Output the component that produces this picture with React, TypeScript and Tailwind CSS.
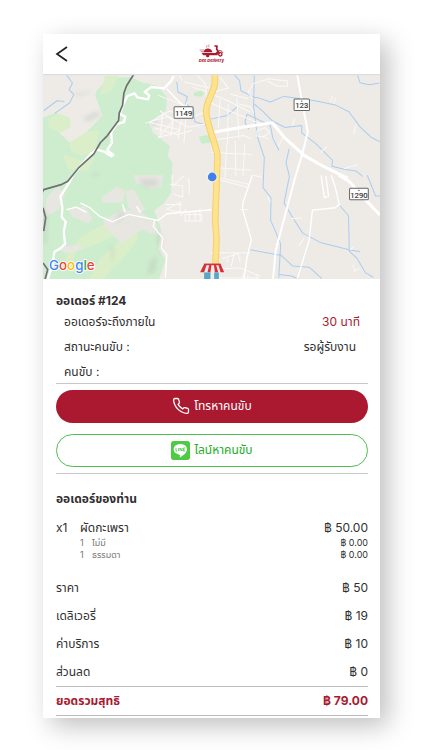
import type { ReactNode } from "react";
import clsx from "clsx";

const FONT = "font-[Inter,'Noto_Sans_Thai','Noto_Sans','DejaVu_Sans',sans-serif]";

const summary = [
  { label: "ราคา", value: "50" },
  { label: "เดลิเวอรี่", value: "19" },
  { label: "ค่าบริการ", value: "10" },
  { label: "ส่วนลด", value: "0" },
];

const options = [
  { qty: 1, name: "ไม่มี", price: "0.00" },
  { qty: 1, name: "ธรรมดา", price: "0.00" },
];

function DeliveryLogo() {
  return (
    <svg viewBox="0 0 84 60" className="h-5 w-7" role="img" aria-label="Dee Delivery">
      <g fill="none" stroke="#a81a30" strokeLinecap="round" strokeLinejoin="round">
        <path d="M9 18h11M12 23h8M15 28h5" strokeWidth="1.5" />
        <path d="M30 4c-4 3 2 4-1 6M36 2c-4 3 2 4-1 7" strokeWidth="1.5" />
        <path d="M54 6h6l-1 9 7 12" strokeWidth="5" />
        <circle cx="70" cy="31" r="5" strokeWidth="4" />
        <path d="M60 26c4-8 14-8 17-1" strokeWidth="3" />
      </g>
      <g fill="#a81a30">
        <path d="M20 25c1-15 24-15 26 0z" />
        <path d="M15 27h37c4 0 7-1 8-6l5 5-4 8H23c-5 0-7-2-8-7z" />
        <circle cx="32" cy="35" r="5" />
      </g>
      <text x="43" y="54" textAnchor="middle" fontSize="12" fontWeight="800" fontStyle="italic" fill="#a81a30" fontFamily="Inter, sans-serif">
        Dee Delivery
      </text>
    </svg>
  );
}

function LineIcon() {
  return (
    <svg viewBox="0 0 57 57" className="size-[19px]" aria-hidden="true">
      <rect width="57" height="57" rx="8" fill="#4ccb43" />
      <path d="M28 9C16 9 8 16 8 25c0 8 7 14 17 16 3 1 2 3 1 7 0 2 2 1 3 0 8-5 19-13 19-23C48 16 40 9 28 9z" fill="#fff" />
      <path d="M15 21v9h4M23 21v9M27 30v-9l6 9v-9M42 21h-5v9h5M37 25h4" fill="none" stroke="#4ccb43" strokeWidth="2.5" />
    </svg>
  );
}

function RoadSign({ x, y, width, label }: { x: number; y: number; width: number; label: string }) {
  return (
    <g>
      <rect x={x} y={y} width={width} height="34" rx="3" fill="#fff" stroke="#666" strokeWidth="3" />
      <circle cx={x + width / 2} cy={y + 6} r="2" fill="#333" />
      <text x={x + width / 2} y={y + 28} textAnchor="middle" fontSize="23" fill="#333" stroke="#333" strokeWidth="0.5" fontFamily="Roboto, sans-serif">
        {label}
      </text>
    </g>
  );
}

function DeliveryMap() {
  return (
    <svg viewBox="0 0 1008 612" className="block w-full" role="img" aria-label="Map">
      <defs>
        <filter id="soft"><feGaussianBlur stdDeviation="7" /></filter>
        <filter id="edge"><feGaussianBlur stdDeviation="2" /></filter>
      </defs>
      <rect width="1008" height="615" fill="#eeebe7" />

      {/* Hills and forest */}
      <g filter="url(#edge)">
        <path d="M0 130l40-14 20 10-30 20 14 25 36 34 48-30 30-30 20-20-22-60 4-15 35-35 40-5 30 0 30 15 48 10 28 35-4 40-52 35 14 30 50 40-6 30 14 20-4 90-20 30-30 24 20 55-8 60 22 30-20 60-20 30-20 30-30 40-100 4-40 50H0z" fill="#ceedcf" />
        <g fill="#daefc9">
          <path d="M15 135l30-17 35 12 3 30-30 16-35-16z" />
          <path d="M80 205l48-30 40-10-10 60-40 20-35-15z" />
          <path d="M60 240l58 20 36-10-20 40-60-5z" />
          <path d="M185 5l42 0-25 45-30 12z" />
          <path d="M110 490l75-42 50 26-80 36-55 20-20 50-30 10 30-60z" />
          <path d="M240 490l40-30 4 35-40 50-65 68h-40l30-60z" />
        </g>
        <g fill="#e8e6e1">
          <path d="M10 370l35-34 20 24-18 45-40 23z" />
          <path d="M75 405l50-10 22 36-10 16-50-20z" />
          <path d="M175 370l48-34 22 14-6 34-60 2z" />
          <path d="M180 440l60-38 60 16 38 28 10 40-52-20-60 40-48-44z" />
          <path d="M45 518l65-8 8 14-50 12z" />
          <path d="M270 303h90l-6 34-35 8-40-20z" />
          <path d="M246 350l25-5 34 60-20 14-30-20z" />
        </g>
      </g>
      <g fill="#b8c4b7" opacity="0.4" filter="url(#soft)">
        <path d="M120 130l45-20 6 14-40 20zM80 60l80-10-50 14zM285 315h55l6 18-40 7z" />
        <path d="M340 460l16 30-2 50-14-40zM225 410l25 8-32 30zM200 510l14 10-4 60zM320 560l22-20-6 50-26 12z" />
        <path d="M140 300l30-8-8 16zM330 130l18 20-25 10zM0 400l15 20-3 80-12 20z" />
      </g>
      <g fill="#cbeccb">
        <path d="M450 56l24-7 9 10-10 9-22-2zM466 187l40-7v25l-32 4z" />
      </g>

      {/* Waterways */}
      <g fill="none" stroke="#a9cdf0" strokeWidth="3" strokeLinejoin="round">
        <path d="M70 2l18 25-10 20 14 14-12 25-45 32M2 110l40-30 22 2" />
        <path d="M400 24l4 30 28 14-6 20 24 20 4 35 28 8 20 10" />
        <path d="M570 0l18 20 4 30 40 20 10 0M632 90l24 20 30 30 38 20 50-6 0 22 42 32 50 50-2 18 40 10 32 4 20 16" />
        <path d="M501 135l50-11 30-26M610 120l-6 25 12 20M610 120l70 34 8 40 18 35" />
        <path d="M640 70l40 14 40-17 60 8 30 4 65 14 40 20 34 46 32 30 27 14M940 0l8 26 28 6 30-5" />
        <path d="M632 0l-2 100 12 90 20 60-4 90 24 30-1 68 30 70-6 102M736 224l-9 42 10 40-16 80 30 50 26 40 55 29 90 22 26 4" />
        <path d="M710 540l36 34 50 4 38 34M620 526l90 16M888 394l26 30 2 106 24 22 24 42 24 14" />
        <path d="M706 600l38 4 24 11M970 303l25 62h13" />
      </g>

      {/* Small local streets */}
      <g fill="none" stroke="#faf9f7" strokeWidth="3">
        <path d="M345 64l90 35M384 8l24-6 8 18M424 24l75 18M448 40l42 12M462 3l24 28 6 80-54 20-60-20-60 34M350 110l40 30-44 50 60-18 14-56M320 145l90 22M305 147l70-20 60 32 56-10M358 120l-8 60M394 104l-12 84M410 155l-6 40M430 85l-8 120M330 160l70 22 46-14" />
        <path d="M380 330l40 5M385 303l4 32 32-30M365 390l50 0M370 405l40-22v30zM425 420h50v20h-50zM438 410v30M455 410v30M470 403v38M410 425l20-20M390 360l28 8v-30M436 310l2 50" />
        <path d="M504 60l50 20 65 34M500 86l55 24 100 40M530 75l-6 85M554 90l-2 120M580 72l6 120M500 200l100-16 24 10M504 235l120 6M510 280l112 8M520 210v100M550 210l-6 100M575 200l2 105M604 210l-6 95M628 74l-14-20 16-26 45-14 56 7v16h-30l-30-16" />
        <path d="M640 170l24-10 14 14-20 15-18-4zM655 185l20 10M585 90l35 8 10 18M530 10l24 32-40 12M560 60l52 14M860 83l6-17M870 88l6-16M930 180l5-26M745 155l8-22M704 216l13-26M830 235l19-18M900 283l42-12" />
        <path d="M525 310l90 20M530 318l80 20M630 303l24 6M672 368l8 15M742 433l32-2M590 405h24M928 570l4 20 14-10M918 526l10-8M780 492l-14 22M500 535h120M536 552l48-14 6 26M552 550v12M570 544v10M573 532l-10 44M500 583l90-3 60 25M600 594l-3 20M613 600v15M640 600v15M525 586v20M506 610h140" />
      </g>

      {/* Main roads */}
      <g fill="none" stroke="#fff" strokeLinejoin="round">
        <path d="M390 8l-8 15-20 20-38-4-20 15 14 10-4 12-32-6-8-12-22 8-14 30-8 24 16 8-4 16-22 6-16 26 2 30-14 22 18 14-6 4-22-14-20-6-18 12-54 64-12 24-26 40 6 34-2 28 12 14-6 30 4 36-14 14-18 10-6 40-20 60" strokeWidth="7" />
        <path d="M370 44l26 28 24 24" strokeWidth="4" />
        <path d="M501 176l90-16 95-14 36 44 60 54 60 34 70 34" strokeWidth="9" />
        <path d="M885 303l30 18 40 45 53 56" strokeWidth="9" />
        <path d="M760 0l14 78 18 95-16 65-24 80-56 210-8 84" strokeWidth="6" />
        <path d="M70 406l30-8 30 16M112 386l28 14 30 26 38 16 48-22 88 18 26-20 134-12M334 436l-4 20 28 34-4 30 16 20-4 70M238 390l8 24M280 395l12 20" strokeWidth="4" />
        <path d="M862 303l12 35 12 52-12 10-68 7-10 90-36 118M832 303l10 68 12-6-8-60M626 303l-28 82-1 20 26 90-14 60-8 60" strokeWidth="4" />
      </g>
      <g fill="none" strokeLinejoin="round">
        <path d="M514 0v28c-2 26-26 54-26 84 0 36 28 92 34 132l-2 60-5 130 4 60-5 121" stroke="#f3d16b" strokeWidth="20" />
        <path d="M514 0v28c-2 26-26 54-26 84 0 36 28 92 34 132l-2 60-5 130 4 60-5 121" stroke="#ffe28e" strokeWidth="14" />
        <path d="M272 0l-22 35-8 22-4 36-10 24-2 22-34 46-20 20-20 34-44 40-34 42-20 10-18 5-34 10-22 40M0 400l8 30-6 40M0 565l14 20-8 30" stroke="#707070" strokeWidth="5" />
      </g>

      <RoadSign x={392} y={98} width={57} label="1149" />
      <RoadSign x={751} y={75} width={46} label="123" />
      <RoadSign x={917} y={342} width={56} label="1290" />

      <circle cx="506" cy="308" r="16" fill="#fff" opacity="0.5" />
      <circle cx="506" cy="308" r="13" fill="#3f80ee" />

      {/* Shop marker */}
      <g>
        <path d="M484 592h42v23h-42z" fill="#e7eef0" />
        <path d="M482 593h19v22h-19zM512 593h14v22h-14z" fill="#5ba6c7" />
        <path d="M482 568h48l11 25h-70z" fill="#f4e9e7" />
        <path d="M482 568h8l-8 25h-12zM498 568h6l-3 25h-9zM511 568h6l7 25h-10zM524 568h7l11 25h-11z" fill="#d82f36" />
        <path d="M482 567h49v5h-49z" fill="#d82f36" />
      </g>

      <text x="18" y="585" fontSize="40" fontWeight="500" stroke="#fff" strokeWidth="5" paintOrder="stroke" fontFamily="Inter, sans-serif">
        <tspan fill="#4285f4">G</tspan>
        <tspan fill="#ea4335">o</tspan>
        <tspan fill="#fbbc05">o</tspan>
        <tspan fill="#4285f4">g</tspan>
        <tspan fill="#34a853">l</tspan>
        <tspan fill="#ea4335">e</tspan>
      </text>
      <path d="M0 2h1008" stroke="#dedede" strokeWidth="4" />
    </svg>
  );
}

function Row({ label, children, className }: { label: string; children?: ReactNode; className?: string }) {
  return (
    <div className={clsx("flex items-center justify-between", className)}>
      <span>{label}</span>
      <span>{children}</span>
    </div>
  );
}

export default function App() {
  return (
    <div className={clsx("bg-white py-[34px] pr-[42px] pl-[43px] text-xs text-[#303030]", FONT)}>
      <main className="bg-white pb-0.5 shadow-[8px_8px_24px_rgba(0,0,0,0.25)]">
        <header className="grid h-10 grid-cols-3 items-center px-3">
          <button type="button" aria-label="Back" className="w-fit">
            <svg viewBox="0 0 14 18" className="h-[18px] w-3.5" fill="none" stroke="#222" strokeWidth="1.7">
              <path d="M12 2L2 9l10 7" />
            </svg>
          </button>
          <div className="flex justify-center">
            <DeliveryLogo />
          </div>
        </header>

        <DeliveryMap />

        <div className="pt-3 pr-3 pl-[13px]">
          {/* Order status */}
          <section className="border-b border-[#c8c8c8]">
            <h1 className="h-5 leading-5 font-bold">ออเดอร์ #124</h1>
            <Row label="ออเดอร์จะถึงภายใน" className="h-[22px] px-2">
              <span className="text-[#a81a30]">30 นาที</span>
            </Row>
            <Row label="สถานะคนขับ :" className="h-7 pr-3 pl-2">
              รอผู้รับงาน
            </Row>
            <Row label="คนขับ :" className="h-[22px] px-2" />
          </section>

          {/* Contact the driver */}
          <section className="flex flex-col gap-[11px] border-b border-[#c8c8c8] py-1.5">
            <button type="button" className="flex h-[33px] items-center justify-center gap-1 rounded-full bg-[#ab1930] text-white">
              <svg viewBox="0 0 24 24" className="size-[18px]" fill="none" stroke="currentColor" strokeWidth="1.7" strokeLinejoin="round" aria-hidden="true">
                <path d="M22 16.9v3a2 2 0 0 1-2.2 2A19.8 19.8 0 0 1 2.1 4.2 2 2 0 0 1 4.1 2h3a2 2 0 0 1 2 1.7c.1 1 .4 1.9.7 2.8a2 2 0 0 1-.5 2.1L8.1 9.9a16 16 0 0 0 6 6l1.3-1.3a2 2 0 0 1 2.1-.4c.9.3 1.8.6 2.8.7a2 2 0 0 1 1.7 2z" />
              </svg>
              โทรหาคนขับ
            </button>
            <button type="button" className="flex h-[33px] items-center justify-center gap-1 rounded-full border border-[#4fbd50] text-[#22ad27]">
              <LineIcon />
              ไลน์หาคนขับ
            </button>
          </section>

          {/* Ordered items */}
          <section className="pt-[15px]">
            <h2 className="h-5 leading-5 font-bold">ออเดอร์ของท่าน</h2>
            <div className="mt-[11px] flex h-[17px] items-center">
              <span className="w-6">x1</span>
              <span className="grow">ผัดกะเพรา</span>
              <span>฿ 50.00</span>
            </div>
            {options.map((o) => (
              <div key={o.name} className="flex h-3 items-center pl-6 text-[9px]">
                <span className="w-3 text-[#777]">{o.qty}</span>
                <span className="grow text-[#777]">{o.name}</span>
                <span>฿ {o.price}</span>
              </div>
            ))}
          </section>

          {/* Totals */}
          <section className="mt-[13px]">
            {summary.map((s) => (
              <Row key={s.label} label={s.label} className="h-7">
                ฿ {s.value}
              </Row>
            ))}
            <Row label="ยอดรวมสุทธิ" className="h-[30px] border-y border-[#bcbcbc] font-bold text-[#a81a30]">
              ฿ 79.00
            </Row>
          </section>
        </div>
      </main>
    </div>
  );
}
